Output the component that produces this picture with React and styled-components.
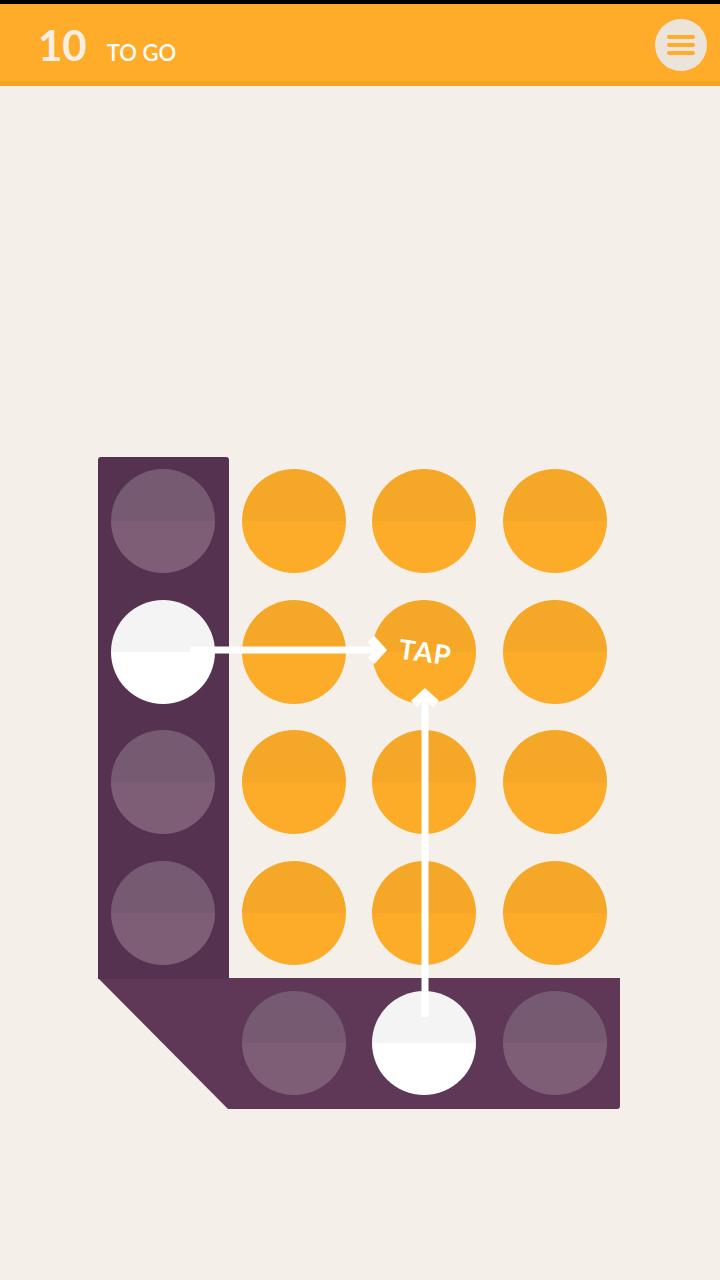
import styled, { createGlobalStyle } from "styled-components";

const GlobalStyle = createGlobalStyle`
  html, body {
    margin: 0;
    padding: 0;
    background: #f4efe8;
    font-family: Lato, "Open Sans", sans-serif;
  }
`;

const Screen = styled.div`
  width: 720px;
  height: 1280px;
  background: #f4efe8;
  overflow: hidden;
  display: flex;
  flex-direction: column;
`;

const StatusBar = styled.div`
  height: 4px;
  background: #000;
`;

const Header = styled.header`
  height: 77px;
  background: #ffac2a;
  border-bottom: 5px solid #f4a222;
  display: flex;
  align-items: center;
  justify-content: space-between;
  padding: 0 13px 0 38px;
`;

const Counter = styled.div`
  display: flex;
  align-items: baseline;
  gap: 20px;
  color: #f6efe6;
  margin-top: 4px;
`;

const Count = styled.span`
  font-size: 42px;
  font-weight: 700;
`;

const Label = styled.span`
  font-size: 22px;
  font-weight: 600;
  color: #fff;
`;

const MenuButton = styled.button`
  width: 52px;
  height: 52px;
  border-radius: 50%;
  border: none;
  background: #ece4da;
  display: flex;
  flex-direction: column;
  align-items: center;
  justify-content: center;
  gap: 4px;
  padding: 0;
  margin-top: 4px;
`;

const MenuLine = styled.span`
  width: 28px;
  height: 4px;
  border-radius: 2px;
  background: #ffac2a;
`;

const Stage = styled.main`
  flex: 1;
  display: flex;
  padding: 371px 0 0 98px;
`;

const Board = styled.div`
  position: relative;
  width: 522px;
  height: 652px;
`;

const Backing = styled.svg`
  position: absolute;
  inset: 0;
`;

const Grid = styled.div`
  position: relative;
  display: grid;
  grid-template-columns: repeat(4, 130.5px);
  grid-template-rows: repeat(5, 130.5px);
  margin-top: -1px;
`;

const Cell = styled.div`
  display: flex;
  align-items: center;
  justify-content: center;
`;

const tones = {
  orange: ["#f5a728", "#fdac29"],
  purple: ["#755a71", "#7d5e76"],
  white: ["#f4f4f4", "#ffffff"],
};

const Dot = styled.div`
  width: 104px;
  height: 104px;
  border-radius: 50%;
  background: linear-gradient(
    to bottom,
    ${(p) => tones[p.$tone][0]} 50%,
    ${(p) => tones[p.$tone][1]} 50%
  );
  display: flex;
  align-items: center;
  justify-content: center;
`;

const Tap = styled.span`
  color: #fff;
  font-size: 27px;
  font-weight: 700;
  letter-spacing: 1px;
  transform: rotate(8deg);
  margin-left: 2px;
`;

const Arrows = styled.svg`
  position: absolute;
  inset: 0;
  pointer-events: none;
`;

const layout = [
  ["purple", "orange", "orange", "orange"],
  ["white", "orange", "tap", "orange"],
  ["purple", "orange", "orange", "orange"],
  ["purple", "orange", "orange", "orange"],
  [null, "purple", "white", "purple"],
];

export default function App() {
  return (
    <Screen>
      <GlobalStyle />
      <StatusBar />
      <Header>
        <Counter>
          <Count>10</Count>
          <Label>TO GO</Label>
        </Counter>
        <MenuButton aria-label="menu">
          <MenuLine />
          <MenuLine />
          <MenuLine />
        </MenuButton>
      </Header>
      <Stage>
        <Board>
          <Backing width="522" height="652" viewBox="0 0 522 652">
            <path
              d="M0 521 L522 521 L522 649 Q522 652 519 652 L130 652 Z"
              fill="#603857"
            />
            <path
              d="M0 3 Q0 0 3 0 L128 0 Q131 0 131 3 L131 522 L0 522 Z"
              fill="#553350"
            />
          </Backing>
          <Grid>
            {layout.flat().map((tone, i) => (
              <Cell key={i}>
                {tone === "tap" ? (
                  <Dot $tone="orange">
                    <Tap>TAP</Tap>
                  </Dot>
                ) : tone ? (
                  <Dot $tone={tone} />
                ) : null}
              </Cell>
            ))}
          </Grid>
          <Arrows width="522" height="652" viewBox="0 0 522 652">
            <g stroke="#fff" fill="none">
              <line x1="92" y1="193" x2="280" y2="193" strokeWidth="7" />
              <polyline points="273,182 283,193 273,204" strokeWidth="9" />
              <line x1="327" y1="560" x2="327" y2="240" strokeWidth="7" />
              <polyline points="316,247 327,237 338,247" strokeWidth="9" />
            </g>
          </Arrows>
        </Board>
      </Stage>
    </Screen>
  );
}
